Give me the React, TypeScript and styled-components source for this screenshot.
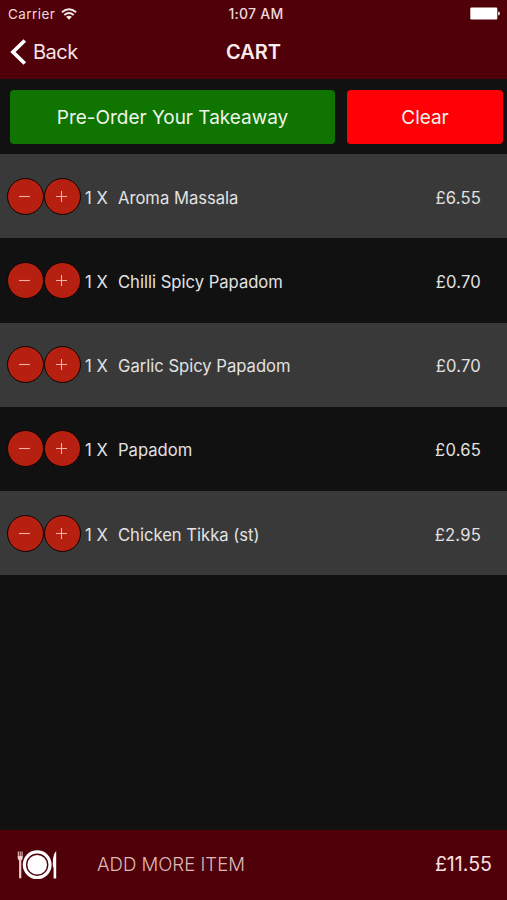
import React from "react";
import styled, { createGlobalStyle } from "styled-components";

const GlobalStyle = createGlobalStyle`
  * { box-sizing: border-box; }
  body { margin: 0; background: #111; font-family: Inter, "Liberation Sans", sans-serif; }
  button { font: inherit; border: 0; padding: 0; cursor: pointer; }
`;

const Screen = styled.div`
  width: 507px;
  height: 900px;
  display: flex;
  flex-direction: column;
  overflow: hidden;
  background: #111;
  color: #e2e2e2;
`;

const Header = styled.header`
  height: 79px;
  background: #4f0009;
`;

const StatusBar = styled.div`
  height: 27px;
  padding: 0 7px 0 8px;
  display: grid;
  grid-template-columns: 180px 1fr 180px;
  align-items: center;
  font-size: 13.5px;
  color: #f0d8d8;
`;

const Carrier = styled.div`
  display: flex;
  align-items: center;
  gap: 6px;
  letter-spacing: 0.45px;
`;

const Clock = styled.div`
  padding-left: 4px;
  text-align: center;
  font-size: 14px;
  font-weight: 500;
  letter-spacing: 0.25px;
`;

const Battery = styled.svg`
  justify-self: end;
`;

const NavBar = styled.nav`
  height: 49px;
  padding-left: 10px;
  display: grid;
  grid-template-columns: 160px 167px 160px;
  align-items: center;
`;

const BackButton = styled.button`
  display: flex;
  align-items: center;
  gap: 6px;
  background: none;
  color: #f6e2e2;
  font-size: 20px;
  letter-spacing: -0.5px;
`;

const Title = styled.h1`
  margin: 0;
  padding-top: 1px;
  text-align: center;
  font-size: 20px;
  font-weight: 600;
  color: #fbeaea;
`;

const Actions = styled.div`
  height: 75px;
  padding: 11px 4px 10px 10px;
  display: grid;
  grid-template-columns: 325px 156px;
  gap: 12px;
`;

const ActionButton = styled.button<{ $color: string }>`
  height: 54px;
  border-radius: 4px;
  background: ${(p) => p.$color};
  color: #eef5ea;
  font-size: 19px;
  letter-spacing: -0.03px;
`;

const Items = styled.ul`
  flex: 1;
  margin: 0;
  padding: 0;
  list-style: none;
`;

const Item = styled.li`
  height: 84.25px;
  padding: 0 26px 0 7px;
  display: flex;
  align-items: center;
  font-size: 16.6px;
  background: #111;
  &:nth-child(odd) { background: #393939; }
`;

const Stepper = styled.div`
  width: 78px;
  display: flex;
`;

const StepButton = styled.button`
  width: 37px;
  height: 37px;
  border: 1px solid #0c0403;
  border-radius: 50%;
  display: grid;
  place-items: center;
  background: #b52011;
`;

const StepSvg = styled.svg`
  margin-right: 2px;
`;

const Quantity = styled.span`
  width: 33px;
  padding-top: 3px;
  white-space: nowrap;
`;

const Name = styled.span`
  flex: 1;
  padding-top: 3px;
`;

const Price = styled.span`
  padding-top: 3px;
  letter-spacing: 0.2px;
`;

const Footer = styled.footer`
  height: 70px;
  padding: 0 15px 2px 17px;
  display: flex;
  align-items: center;
  background: #4f0009;
`;

const Plate = styled.svg`
  margin-top: 2px;
`;

const AddMore = styled.button`
  margin-left: 40px;
  background: none;
  color: #dfb9b9;
  font-size: 18.6px;
  font-weight: 300;
`;

const Total = styled.span`
  margin-left: auto;
  color: #fae0e0;
  font-size: 19.6px;
`;

const items = [
  { name: "Aroma Massala", price: "£6.55" },
  { name: "Chilli Spicy Papadom", price: "£0.70" },
  { name: "Garlic Spicy Papadom", price: "£0.70" },
  { name: "Papadom", price: "£0.65" },
  { name: "Chicken Tikka (st)", price: "£2.95" },
];

const StepIcon = ({ plus = false }: { plus?: boolean }) => (
  <StepSvg width="11" height="11" viewBox="0 0 11 11" stroke="#efb0a6" strokeWidth="1.1">
    <path d={plus ? "M0 5.5h11M5.5 0v11" : "M0 5.5h11"} />
  </StepSvg>
);

const WifiIcon = () => (
  <svg width="16" height="12" viewBox="0 0 16 12" fill="none" stroke="#f8e6e6" strokeWidth="2">
    <path d="M.9 4.2Q8-1.8 15.1 4.2M3.3 7Q8 3 12.7 7" />
    <path d="M5.1 8.8Q8 6.7 10.9 8.8L8 11.7Z" fill="#f8e6e6" stroke="none" />
  </svg>
);

const PlateIcon = () => (
  <Plate width="40" height="30" viewBox="0 0 40 30">
    <g fill="none" stroke="#f0d0d0">
      <path d="M1.3 1.5v6M3.2 1.5v6M5.1 1.5v6" strokeWidth="1" />
      <path d="M3.2 10v18.3" strokeWidth="2.2" />
    </g>
    <path d="M.8 6h4.8v2.3Q5.6 10.5 3.2 10.5T.8 8.3Z" fill="#f0d0d0" />
    <circle cx="20.2" cy="14.7" r="14.4" fill="#fff" />
    <circle cx="20.2" cy="14.7" r="10.5" fill="none" stroke="#4f0009" strokeWidth="1.4" />
    <path d="M39.2 28.4h-2.6V18q-1-1-.8-5 .3-10 3.4-11.8Z" fill="#fff" />
  </Plate>
);

export default function App() {
  return (
    <Screen>
      <GlobalStyle />
      <Header>
        <StatusBar>
          <Carrier><span>Carrier</span><WifiIcon /></Carrier>
          <Clock>1:07 AM</Clock>
          <Battery width="31" height="13" viewBox="0 0 31 13">
            <rect x="1.3" y=".5" width="27" height="12" rx="1.2" fill="#fff" />
            <path d="M29.1 4.5q1.9 0 1.9 2t-1.9 2Z" fill="#f6dede" />
          </Battery>
        </StatusBar>
        <NavBar>
          <BackButton>
            <svg width="17" height="26" viewBox="0 0 17 26" fill="none" stroke="#fff" strokeWidth="3.8">
              <path d="M14.8 1.5L3 13l11.8 11.5" />
            </svg>
            <span>Back</span>
          </BackButton>
          <Title>CART</Title>
        </NavBar>
      </Header>
      <Actions>
        <ActionButton $color="#0f7400">Pre-Order Your Takeaway</ActionButton>
        <ActionButton $color="#fe0006">Clear</ActionButton>
      </Actions>
      <Items>
        {items.map((item) => (
          <Item key={item.name}>
            <Stepper>
              <StepButton aria-label="Remove one"><StepIcon /></StepButton>
              <StepButton aria-label="Add one"><StepIcon plus /></StepButton>
            </Stepper>
            <Quantity>1 X</Quantity>
            <Name>{item.name}</Name>
            <Price>{item.price}</Price>
          </Item>
        ))}
      </Items>
      <Footer>
        <PlateIcon />
        <AddMore>ADD MORE ITEM</AddMore>
        <Total>£11.55</Total>
      </Footer>
    </Screen>
  );
}
